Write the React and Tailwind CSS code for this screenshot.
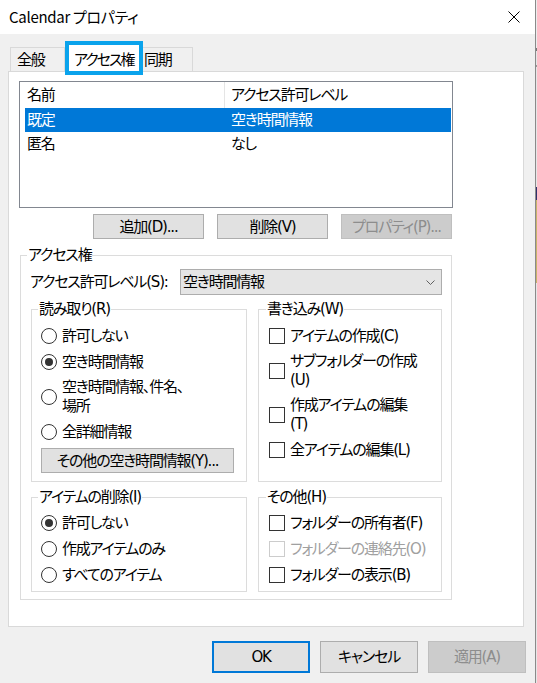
import React from "react";

function Radio({ checked }) {
  return (
    <span className="w-[16px] h-[16px] rounded-full border border-[#333333] bg-white flex items-center justify-center shrink-0">
      {checked && <span className="w-[8px] h-[8px] rounded-full bg-[#333333]" />}
    </span>
  );
}

function Check({ disabled }) {
  return (
    <span
      className={
        disabled
          ? "w-[16px] h-[16px] border border-[#cccccc] bg-white shrink-0"
          : "w-[16px] h-[16px] border border-[#333333] bg-white shrink-0"
      }
    />
  );
}

function RadioRow({ checked, children, two }) {
  return (
    <div className={two ? "h-[44px] flex items-center gap-[5px]" : "h-[26px] flex items-center gap-[5px]"}>
      <Radio checked={checked} />
      <span className={two ? "leading-[19px]" : ""}>{children}</span>
    </div>
  );
}

function CheckRow({ disabled, children, two }) {
  return (
    <div className={two ? "h-[44px] flex items-center gap-[5px]" : "h-[26px] flex items-center gap-[5px]"}>
      <Check disabled={disabled} />
      <span className={(two ? "leading-[19px] " : "") + (disabled ? "text-[#a0a0a0]" : "")}>{children}</span>
    </div>
  );
}

function Btn({ children, disabled, className = "" }) {
  return (
    <div
      className={
        (disabled
          ? "bg-[#cccccc] border border-[#bfbfbf] text-[#8d8d8d] "
          : "bg-[#e1e1e1] border border-[#adadad] ") +
        "flex items-center justify-center shrink-0 " +
        className
      }
    >
      {children}
    </div>
  );
}

export default function App() {
  return (
    <div className="w-[537px] h-[683px] flex bg-[#f0f0f0] text-black font-['DejaVu_Sans','Noto_Sans_CJK_JP',sans-serif] [font-feature-settings:'palt'] tracking-[-1.2px] whitespace-nowrap text-[15px] leading-[20px] overflow-hidden">
      <div className="w-[535px] h-full flex flex-col shrink-0">
        {/* Title bar */}
        <div className="h-[34px] bg-white flex items-center pl-[9px] pr-[15px] shrink-0">
          <span className="flex-1 tracking-[-0.3px] font-['Noto_Sans_CJK_JP',sans-serif]">Calendar プロパティ</span>
          <svg width="12" height="12" viewBox="0 0 12 12">
            <path d="M0.5 0.5L11.5 11.5M11.5 0.5L0.5 11.5" stroke="#000" strokeWidth="1" fill="none" />
          </svg>
        </div>

        {/* Tabs */}
        <div className="h-[37px] flex items-end pl-[10px] shrink-0">
          <div className="w-[55px] h-[24px] border border-b-0 border-[#d9d9d9] pl-[6px] flex items-center shrink-0">全般</div>
          <div className="relative z-10 -mb-[4px] w-[78px] h-[34px] border-4 border-[#0aa3ec] bg-white pl-[5px] pt-[3px] flex items-center shrink-0 tracking-[-2px]">
            アクセス権
          </div>
          <div className="w-[50px] h-[24px] border border-l-0 border-b-0 border-[#d9d9d9] pl-[1px] flex items-center shrink-0">同期</div>
        </div>

        {/* Panel */}
        <div className="ml-[8px] w-[516px] h-[556px] bg-white border border-[#d9d9d9] pl-[10px] pt-[9px] flex flex-col shrink-0">
          {/* List */}
          <div className="w-[434px] h-[127px] border border-[#828790] bg-white flex flex-col shrink-0">
            <div className="h-[26px] flex shrink-0">
              <div className="w-[205px] border-r border-[#e5e5e5] pl-[7px] flex items-center">名前</div>
              <div className="pl-[6px] flex items-center">アクセス許可レベル</div>
            </div>
            <div className="ml-[5px] mr-[1px] h-[24px] bg-[#0078d7] text-white flex items-center shrink-0">
              <div className="w-[206px] pl-[2px]">既定</div>
              <div>空き時間情報</div>
            </div>
            <div className="ml-[5px] mr-[1px] h-[24px] flex items-center shrink-0">
              <div className="w-[206px] pl-[2px]">匿名</div>
              <div>なし</div>
            </div>
          </div>

          {/* List buttons */}
          <div className="mt-[6px] w-[433px] flex justify-end gap-[13px] shrink-0">
            <Btn className="w-[111px] h-[25px]">追加(D)...</Btn>
            <Btn className="w-[111px] h-[25px]">削除(V)</Btn>
            <Btn disabled className="w-[111px] h-[25px]">プロパティ(P)...</Btn>
          </div>

          {/* Access group */}
          <fieldset className="mt-[6px] ml-[1px] w-[432px] border border-[#dcdcdc] pl-[10px] pr-[9px] pt-[4px] pb-[7px] min-w-0">
            <legend className="ml-[-4px] px-[1px] leading-[20px]">アクセス権</legend>
            <div className="h-[26px] flex items-center">
              <span className="ml-[-1px] w-[150px] shrink-0">アクセス許可レベル(S):</span>
              <div className="w-[262px] h-[26px] bg-[#e5e5e5] border border-[#adadad] pl-[2px] pr-[6px] flex items-center shrink-0">
                <span className="flex-1">空き時間情報</span>
                <svg width="9" height="5" viewBox="0 0 9 5">
                  <polyline points="0.5,0.5 4.5,4.5 8.5,0.5" stroke="#606060" strokeWidth="1" fill="none" />
                </svg>
              </div>
            </div>

            <div className="mt-[4px] flex gap-[11px]">
              <fieldset className="w-[216px] h-[183px] border border-[#dcdcdc] pl-[9px] pt-[4px] min-w-0 shrink-0">
                <legend className="ml-[-3px] px-[1px] leading-[20px]">読み取り(R)</legend>
                <RadioRow>許可しない</RadioRow>
                <RadioRow checked>空き時間情報</RadioRow>
                <RadioRow two>
                  空き時間情報、件名、
                  <br />
                  場所
                </RadioRow>
                <RadioRow>全詳細情報</RadioRow>
                <Btn className="mt-[3px] w-[193px] h-[25px]">その他の空き時間情報(Y)...</Btn>
              </fieldset>
              <fieldset className="w-[184px] h-[183px] border border-[#dcdcdc] pl-[10px] pt-[4px] min-w-0 shrink-0">
                <legend className="ml-[-3px] px-[1px] leading-[20px]">書き込み(W)</legend>
                <CheckRow>アイテムの作成(C)</CheckRow>
                <CheckRow two>
                  サブフォルダーの作成
                  <br />
                  (U)
                </CheckRow>
                <CheckRow two>
                  作成アイテムの編集
                  <br />
                  (T)
                </CheckRow>
                <CheckRow>全アイテムの編集(L)</CheckRow>
              </fieldset>
            </div>

            <div className="mt-[5px] flex gap-[11px]">
              <fieldset className="w-[216px] h-[105px] border border-[#dcdcdc] pl-[9px] pt-[3px] min-w-0 shrink-0">
                <legend className="ml-[-3px] px-[1px] leading-[20px]">アイテムの削除(I)</legend>
                <RadioRow checked>許可しない</RadioRow>
                <RadioRow>作成アイテムのみ</RadioRow>
                <RadioRow>すべてのアイテム</RadioRow>
              </fieldset>
              <fieldset className="w-[184px] h-[105px] border border-[#dcdcdc] pl-[10px] pt-[3px] min-w-0 shrink-0">
                <legend className="ml-[-3px] px-[1px] leading-[20px]">その他(H)</legend>
                <CheckRow>フォルダーの所有者(F)</CheckRow>
                <CheckRow disabled>フォルダーの連絡先(O)</CheckRow>
                <CheckRow>フォルダーの表示(B)</CheckRow>
              </fieldset>
            </div>
          </fieldset>
        </div>

        {/* Bottom buttons */}
        <div className="mt-[14px] pr-[9px] flex justify-end gap-[10px] shrink-0">
          <div className="w-[98px] h-[32px] bg-[#e1e1e1] border-2 border-[#0078d7] flex items-center justify-center">OK</div>
          <Btn className="w-[98px] h-[32px]">キャンセル</Btn>
          <Btn disabled className="w-[98px] h-[32px]">適用(A)</Btn>
        </div>
      </div>

      {/* Edge of window behind */}
      <div className="w-[2px] h-full border-l border-[#8a8a8a] flex flex-col shrink-0">
        <div className="h-[48px] bg-[#ececec]" />
        <div className="h-[3px] bg-[#777777]" />
        <div className="h-[14px] bg-[#e6e6e6]" />
        <div className="h-[2px] bg-[#999999]" />
        <div className="h-[120px] bg-[#e6e6e6]" />
        <div className="h-[13px] bg-[#30306a]" />
        <div className="h-[83px] bg-[#c8b46a]" />
        <div className="flex-1 bg-[#e6e6e6]" />
      </div>
    </div>
  );
}
